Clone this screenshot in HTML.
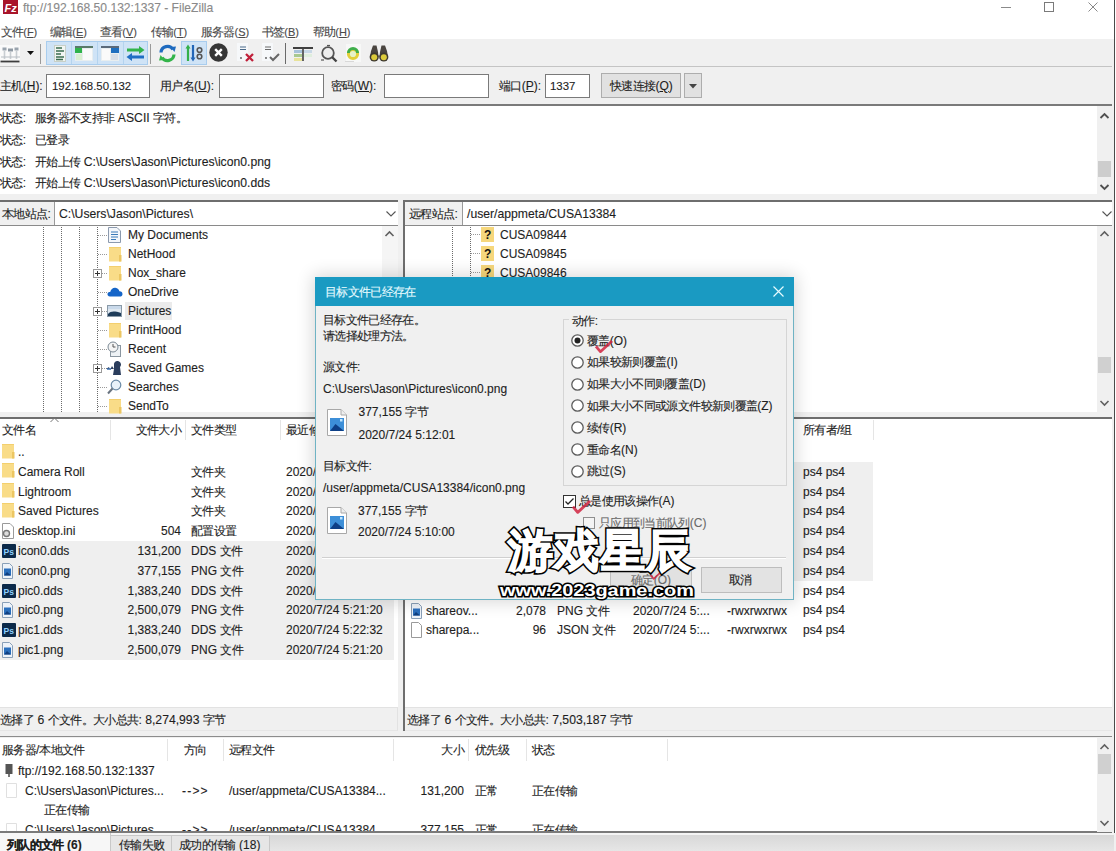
<!DOCTYPE html>
<html><head><meta charset="utf-8">
<style>
*{margin:0;padding:0;box-sizing:border-box}
html,body{width:1116px;height:851px;overflow:hidden;background:#f0f0f0}
body{position:relative;font-family:"Liberation Sans",sans-serif;font-size:12px;color:#1e1e1e}
.a{position:absolute}
.t{position:absolute;white-space:nowrap;line-height:16px;-webkit-text-stroke:0.12px currentColor}
.c{font-size:12px;letter-spacing:-0.65px;font-weight:500}
.u{text-decoration:underline;text-underline-offset:1px}
svg{position:absolute;overflow:visible}
</style></head><body>

<div class="a" style="left:0px;top:0px;width:1116px;height:39px;background:#fff"></div>
<svg style="left:3px;top:0" width="15" height="15" viewBox="0 0 15 15"><rect x="0" y="0" width="15" height="14" fill="#a8142a"/><text x="1.5" y="11.5" font-family="Liberation Sans" font-weight="bold" font-style="italic" font-size="11" fill="#fff">Fz</text></svg>
<div class="t" style="left:23px;top:-0.2px;font-size:12.1px;color:#8a8a8a;">ftp://192.168.50.132:1337 - FileZilla</div>
<div class="a" style="left:1001px;top:7px;width:10px;height:1px;background:#8a8a8a"></div>
<div class="a" style="left:1044px;top:2px;width:10px;height:10px;border:1px solid #7a7a7a"></div>
<svg style="left:1087px;top:1px" width="12" height="12" viewBox="0 0 12 12"><path d="M1.5 1.5L10.5 10.5M10.5 1.5L1.5 10.5" stroke="#888" stroke-width="1"/></svg>
<div class="t" style="left:0.5px;top:23.5px;font-size:11px;color:#4a4a4a;"><span class="c">文件</span>(<span class="u">F</span>)</div>
<div class="t" style="left:49.5px;top:23.5px;font-size:11px;color:#4a4a4a;"><span class="c">编辑</span>(<span class="u">E</span>)</div>
<div class="t" style="left:99.5px;top:23.5px;font-size:11px;color:#4a4a4a;"><span class="c">查看</span>(<span class="u">V</span>)</div>
<div class="t" style="left:150.5px;top:23.5px;font-size:11px;color:#4a4a4a;"><span class="c">传输</span>(<span class="u">T</span>)</div>
<div class="t" style="left:200.5px;top:23.5px;font-size:11px;color:#4a4a4a;"><span class="c">服务器</span>(<span class="u">S</span>)</div>
<div class="t" style="left:261.5px;top:23.5px;font-size:11px;color:#4a4a4a;"><span class="c">书签</span>(<span class="u">B</span>)</div>
<div class="t" style="left:312.5px;top:23.5px;font-size:11px;color:#4a4a4a;"><span class="c">帮助</span>(<span class="u">H</span>)</div>
<div class="a" style="left:0px;top:39px;width:1116px;height:28px;background:#f0f0f0;border-bottom:1px solid #c4c4c4"></div>
<svg style="left:0px;top:43px" width="21" height="20" viewBox="0 0 21 20"><rect x="0" y="2" width="20" height="17" fill="#fafafa"/><rect x="2.5" y="4.5" width="4" height="3" fill="#9aa4ae"/><rect x="8" y="5.5" width="5" height="3" fill="#8f99a3"/><rect x="14.5" y="4.5" width="4" height="3" fill="#9aa4ae"/><path d="M4.5 8V16M10.5 9V16M16.5 8V16" stroke="#c9ced2" stroke-width="1.6"/><path d="M1 14H20" stroke="#b8bec4" stroke-width="1"/><path d="M0.5 18.5H19.5" stroke="#3c3c3c" stroke-width="1.8"/></svg>
<svg style="left:27px;top:51px" width="7" height="5" viewBox="0 0 7 5"><path d="M0 0H7L3.5 4Z" fill="#111"/></svg>
<div class="a" style="left:40px;top:44px;width:1px;height:20px;background:#9a9a9a"></div>
<div class="a" style="left:46px;top:41px;width:102px;height:24px;background:#cfe3f6;border:1px solid #a9cdee"></div>
<div class="a" style="left:71px;top:42px;width:1px;height:22px;background:#b4d3ee"></div>
<div class="a" style="left:97px;top:42px;width:1px;height:22px;background:#b4d3ee"></div>
<div class="a" style="left:123px;top:42px;width:1px;height:22px;background:#b4d3ee"></div>
<svg style="left:54px;top:45px" width="12" height="17" viewBox="0 0 12 17"><rect x="0.5" y="0.5" width="11" height="16" fill="#f2f5f2" stroke="#c8d0c8"/><path d="M2 3H8M2 6H10M2 9H7M2 12H10M2 14.5H9" stroke="#3b6e50" stroke-width="1.3"/></svg>
<svg style="left:75px;top:46px" width="18" height="15" viewBox="0 0 18 15"><rect x="0" y="0" width="18" height="15" fill="#e8eef0"/><rect x="0" y="0" width="18" height="2" fill="#5a7a6a"/><rect x="0" y="2" width="7" height="5" fill="#2fb34a"/><rect x="8" y="3" width="9" height="11" fill="#fafafa"/><rect x="1" y="8" width="6" height="6" fill="#d8efd0"/></svg>
<svg style="left:101px;top:46px" width="18" height="15" viewBox="0 0 18 15"><rect x="0" y="0" width="18" height="15" fill="#e8eef0"/><rect x="0" y="0" width="18" height="2" fill="#5a6a7a"/><rect x="10" y="2" width="8" height="5" fill="#1e6fbf"/><rect x="1" y="3" width="8" height="11" fill="#fafafa"/><rect x="10" y="8" width="7" height="6" fill="#d5dde6"/></svg>
<svg style="left:126px;top:45px" width="19" height="17" viewBox="0 0 19 17"><path d="M1 5H14" stroke="#32b44c" stroke-width="3"/><path d="M13 1L18.5 5L13 9Z" fill="#32b44c"/><path d="M18 12H5" stroke="#1f6ec4" stroke-width="3"/><path d="M6 8L0.5 12L6 16Z" fill="#1f6ec4"/></svg>
<div class="a" style="left:150px;top:44px;width:1px;height:20px;background:#9a9a9a"></div>
<svg style="left:158px;top:44px" width="19" height="19" viewBox="0 0 19 19"><path d="M3 8.5A6.5 6.5 0 0 1 15 5.5" stroke="#1f6bbf" stroke-width="3.2" fill="none"/><path d="M12.5 3L18 2.5L16.5 8Z" fill="#1f6bbf"/><path d="M16 10.5A6.5 6.5 0 0 1 4 13.5" stroke="#33b44a" stroke-width="3.2" fill="none"/><path d="M6.5 16L1 16.5L2.5 11Z" fill="#33b44a"/></svg>
<div class="a" style="left:181px;top:41px;width:26px;height:24px;background:#cfe3f6;border:1px solid #a9cdee"></div>
<svg style="left:185px;top:44px" width="19" height="18" viewBox="0 0 19 18"><path d="M3 17V3" stroke="#34b04a" stroke-width="2.2"/><path d="M0.5 4.5L3 0.5L5.5 4.5Z" fill="#34b04a"/><path d="M8 1V15" stroke="#2266b8" stroke-width="2.2"/><path d="M5.5 13.5L8 17.5L10.5 13.5Z" fill="#2266b8"/><circle cx="14.5" cy="6" r="2.3" fill="none" stroke="#555" stroke-width="1.6"/><circle cx="14.5" cy="12.5" r="2.3" fill="none" stroke="#555" stroke-width="1.6"/></svg>
<svg style="left:209px;top:43px" width="19" height="19" viewBox="0 0 19 19"><circle cx="9.5" cy="9.5" r="9.2" fill="#363636"/><path d="M6.2 6.2L12.8 12.8M12.8 6.2L6.2 12.8" stroke="#fff" stroke-width="2.4"/></svg>
<svg style="left:236px;top:43px" width="19" height="19" viewBox="0 0 19 19"><rect x="1" y="0" width="11" height="18" fill="#f6f8fa"/><path d="M4 4H10M4 6.5H10" stroke="#4a6a8a" stroke-width="1.2"/><circle cx="5" cy="15" r="0.9" fill="#555"/><path d="M10 11L17 18M17 11L10 18" stroke="#c0203a" stroke-width="2.3"/></svg>
<svg style="left:261px;top:43px" width="19" height="19" viewBox="0 0 19 19"><rect x="1" y="0" width="11" height="18" fill="#f6f8fa"/><path d="M4 4H10M4 6.5H10" stroke="#6a6a6a" stroke-width="1.2"/><circle cx="5" cy="15" r="0.9" fill="#555"/><path d="M9 14L12 17L18 11" stroke="#666" stroke-width="2" fill="none"/></svg>
<div class="a" style="left:285px;top:43px;width:1px;height:21px;background:#6a6a6a"></div>
<svg style="left:293px;top:47px" width="20" height="14" viewBox="0 0 20 14"><rect x="0" y="0" width="20" height="2" fill="#404040"/><rect x="1" y="3" width="8" height="3" fill="#a7c2da"/><rect x="11" y="3" width="8" height="3" fill="#c8d8e6"/><rect x="1" y="7" width="8" height="3" fill="#a8c890"/><rect x="11" y="7" width="8" height="3" fill="#dfeedd"/><rect x="1" y="11" width="8" height="3" fill="#e8e39a"/><path d="M10 2V14" stroke="#404040" stroke-width="1.6"/></svg>
<svg style="left:320px;top:45px" width="18" height="17" viewBox="0 0 18 17"><circle cx="8" cy="8" r="5.8" fill="#eeeeee" stroke="#555" stroke-width="1.8"/><path d="M12 12L16.5 16.5" stroke="#444" stroke-width="2.4"/><path d="M7 0.5H10" stroke="#555" stroke-width="1.2"/><path d="M1 15H4" stroke="#555" stroke-width="1.2"/></svg>
<svg style="left:344px;top:44px" width="19" height="19" viewBox="0 0 19 19"><rect x="2" y="0" width="15" height="18" fill="#f7f8f7"/><path d="M1 17.5H10" stroke="#d8d8d8"/><circle cx="9" cy="10" r="4.6" fill="#e6f2c8" stroke="#e2cf3a" stroke-width="3"/><path d="M4.4 9A4.6 4.6 0 0 1 13.6 9" stroke="#3fae4a" stroke-width="3" fill="none"/></svg>
<svg style="left:369px;top:45px" width="20" height="17" viewBox="0 0 20 17"><path d="M4 0.5H7.5L9 7L9.5 12H1L2 6Z" fill="#4a4540"/><path d="M12.5 0.5H16L18 6L19 12H10.5L11 7Z" fill="#4a4540"/><circle cx="5.2" cy="12" r="4.6" fill="#3f3a30"/><circle cx="14.8" cy="12" r="4.6" fill="#3f3a30"/><circle cx="5.2" cy="12.2" r="3" fill="#dccb3a"/><circle cx="14.8" cy="12.2" r="3" fill="#dccb3a"/></svg>
<div class="a" style="left:0px;top:67px;width:1116px;height:38px;background:#f0f0f0"></div>
<div class="a" style="left:0px;top:104px;width:1112px;height:2px;background:#7a7a7a"></div>
<div class="t" style="left:0px;top:78.0px;font-size:12px;color:#1e1e1e;"><span class="c">主机</span>(<span class="u">H</span>):</div>
<div class="a" style="left:46px;top:74px;width:104px;height:24px;background:#fff;border:1px solid #7a7a7a"></div>
<div class="t" style="left:52px;top:78.0px;font-size:11.4px;color:#1e1e1e;">192.168.50.132</div>
<div class="t" style="left:160px;top:78.0px;font-size:12px;color:#1e1e1e;"><span class="c">用户名</span>(<span class="u">U</span>):</div>
<div class="a" style="left:219px;top:74px;width:105px;height:24px;background:#fff;border:1px solid #7a7a7a"></div>
<div class="t" style="left:331px;top:78.0px;font-size:12px;color:#1e1e1e;"><span class="c">密码</span>(<span class="u">W</span>):</div>
<div class="a" style="left:384px;top:74px;width:105px;height:24px;background:#fff;border:1px solid #7a7a7a"></div>
<div class="t" style="left:499px;top:78.0px;font-size:12px;color:#1e1e1e;"><span class="c">端口</span>(<span class="u">P</span>):</div>
<div class="a" style="left:545px;top:74px;width:45px;height:24px;background:#fff;border:1px solid #7a7a7a"></div>
<div class="t" style="left:550px;top:78.0px;font-size:11.4px;color:#1e1e1e;">1337</div>
<div class="a" style="left:601px;top:73px;width:80px;height:25px;background:#e1e1e1;border:1px solid #adadad"></div>
<div class="t" style="left:610px;top:78.0px;font-size:12px;color:#1e1e1e;"><span class="c">快速连接</span>(<span class="u">Q</span>)</div>
<div class="a" style="left:684px;top:73px;width:18px;height:25px;background:#e1e1e1;border:1px solid #adadad"></div>
<svg style="left:689px;top:84px" width="8" height="5" viewBox="0 0 8 5"><path d="M0 0H8L4 4.5Z" fill="#444"/></svg>
<div class="a" style="left:0px;top:106px;width:1112px;height:88px;background:#fff"></div>
<div class="t" style="left:0px;top:110.3px;font-size:12px;color:#1e1e1e;"><span class="c">状态</span>:</div>
<div class="t" style="left:35px;top:110.3px;font-size:12.2px;color:#1e1e1e;"><span class="c">服务器不支持非</span> ASCII <span class="c">字符。</span></div>
<div class="t" style="left:0px;top:131.9px;font-size:12px;color:#1e1e1e;"><span class="c">状态</span>:</div>
<div class="t" style="left:35px;top:131.9px;font-size:12.2px;color:#1e1e1e;"><span class="c">已登录</span></div>
<div class="t" style="left:0px;top:153.5px;font-size:12px;color:#1e1e1e;"><span class="c">状态</span>:</div>
<div class="t" style="left:35px;top:153.5px;font-size:12.2px;color:#1e1e1e;"><span class="c">开始上传</span> C:\Users\Jason\Pictures\icon0.png</div>
<div class="t" style="left:0px;top:175.1px;font-size:12px;color:#1e1e1e;"><span class="c">状态</span>:</div>
<div class="t" style="left:35px;top:175.1px;font-size:12.2px;color:#1e1e1e;"><span class="c">开始上传</span> C:\Users\Jason\Pictures\icon0.dds</div>
<div class="a" style="left:1097px;top:106px;width:15px;height:88px;background:#f0f0f0"></div>
<svg style="left:1100px;top:113px" width="9" height="6" viewBox="0 0 9 6"><path d="M0.5 5L4.5 1L8.5 5" stroke="#505050" stroke-width="1.8" fill="none"/></svg>
<svg style="left:1100px;top:184px" width="9" height="6" viewBox="0 0 9 6"><path d="M0.5 1L4.5 5L8.5 1" stroke="#505050" stroke-width="1.8" fill="none"/></svg>
<div class="a" style="left:1098px;top:161px;width:13px;height:16px;background:#cdcdcd"></div>
<div class="a" style="left:1112px;top:39px;width:2px;height:812px;background:#f0f0f0"></div>
<div class="a" style="left:1114px;top:0px;width:1px;height:851px;background:#4a4a4a"></div>
<div class="a" style="left:1115px;top:0px;width:1px;height:851px;background:#fff"></div>
<div class="a" style="left:0px;top:200px;width:398px;height:2px;background:#6e6e6e"></div>
<div class="a" style="left:0px;top:202px;width:55px;height:23px;background:#f0f0f0;border-right:1px solid #9a9a9a"></div>
<div class="t" style="left:2px;top:205.5px;font-size:12px;color:#1e1e1e;"><span class="c">本地站点</span>:</div>
<div class="a" style="left:55px;top:202px;width:343px;height:23px;background:#fff"></div>
<div class="t" style="left:59px;top:205.5px;font-size:12.2px;color:#1e1e1e;">C:\Users\Jason\Pictures\</div>
<svg style="left:386px;top:211px" width="10" height="6" viewBox="0 0 10 6"><path d="M0.5 0.5L5 5L9.5 0.5" stroke="#555" stroke-width="1.1" fill="none"/></svg>
<div class="a" style="left:0px;top:225px;width:398px;height:1px;background:#8a8a8a"></div>
<div class="a" style="left:0px;top:226px;width:398px;height:186px;background:#fff"></div>

<div class="a" style="left:403px;top:200px;width:709px;height:2px;background:#6e6e6e"></div>
<div class="a" style="left:403px;top:202px;width:2px;height:210px;background:#6e6e6e"></div>
<div class="a" style="left:405px;top:202px;width:58px;height:23px;background:#f0f0f0;border-right:1px solid #9a9a9a"></div>
<div class="t" style="left:409px;top:205.5px;font-size:12px;color:#1e1e1e;"><span class="c">远程站点</span>:</div>
<div class="a" style="left:463px;top:202px;width:649px;height:23px;background:#fff"></div>
<div class="t" style="left:467px;top:205.5px;font-size:12.2px;color:#1e1e1e;">/user/appmeta/CUSA13384</div>
<svg style="left:1102px;top:211px" width="10" height="6" viewBox="0 0 10 6"><path d="M0.5 0.5L5 5L9.5 0.5" stroke="#555" stroke-width="1.1" fill="none"/></svg>
<div class="a" style="left:405px;top:225px;width:707px;height:1px;background:#8a8a8a"></div>
<div class="a" style="left:405px;top:226px;width:707px;height:186px;background:#fff"></div>

<div class="a" style="left:0px;top:417px;width:398px;height:2px;background:#6e6e6e"></div>
<div class="a" style="left:0px;top:419px;width:398px;height:288px;background:#fff"></div>
<div class="a" style="left:403px;top:417px;width:709px;height:2px;background:#6e6e6e"></div>
<div class="a" style="left:403px;top:419px;width:2px;height:312px;background:#6e6e6e"></div>
<div class="a" style="left:405px;top:419px;width:707px;height:288px;background:#fff"></div>

<div class="a" style="left:0px;top:707px;width:398px;height:24px;background:#f0f0f0;border-top:1px solid #e2e2e2;border-right:1px solid #e2e2e2;border-bottom:1px solid #e6e6e6"></div>
<div class="t" style="left:0px;top:711.5px;font-size:12.2px;color:#1e1e1e;"><span class="c">选择了</span> 6 <span class="c">个文件。大小总共</span>: 8,274,993 <span class="c">字节</span></div>
<div class="a" style="left:405px;top:707px;width:707px;height:24px;background:#f0f0f0;border-top:1px solid #e2e2e2;border-bottom:1px solid #e6e6e6"></div>
<div class="t" style="left:407px;top:711.5px;font-size:12.2px;color:#1e1e1e;"><span class="c">选择了</span> 6 <span class="c">个文件。大小总共</span>: 7,503,187 <span class="c">字节</span></div>
<div class="a" style="left:0px;top:735.5px;width:1112px;height:1.5px;background:#8c8c8c"></div>
<div class="a" style="left:0px;top:738px;width:1112px;height:94px;background:#fff"></div>

<div class="a" style="left:0px;top:832px;width:1112px;height:1px;background:#7a7a7a"></div>
<div class="a" style="left:0px;top:833px;width:1116px;height:18px;background:#f0f0f0"></div>



<div class="a" style="left:43px;top:226px;width:1px;height:186px;background:repeating-linear-gradient(#fff 0 1px,#6a6a6a 1px 2px)"></div>
<div class="a" style="left:61px;top:226px;width:1px;height:186px;background:repeating-linear-gradient(#fff 0 1px,#6a6a6a 1px 2px)"></div>
<div class="a" style="left:79px;top:226px;width:1px;height:186px;background:repeating-linear-gradient(#fff 0 1px,#6a6a6a 1px 2px)"></div>
<div class="a" style="left:97px;top:226px;width:1px;height:186px;background:repeating-linear-gradient(#fff 0 1px,#6a6a6a 1px 2px)"></div>
<div class="a" style="left:98px;top:235px;width:9px;height:1px;background:repeating-linear-gradient(90deg,#9a9a9a 0 1px,#fff 1px 2px)"></div>
<svg style="left:108px;top:227px" width="13" height="16" viewBox="0 0 13 16"><path d="M0.5 0.5H9L12.5 4V15.5H0.5Z" fill="#f4f7fb" stroke="#8c9aae"/><path d="M3 5H10M3 7.5H10M3 10H10M3 12.5H8" stroke="#3a7ab8" stroke-width="1"/></svg>
<div class="t" style="left:128px;top:227.0px;font-size:12px;color:#1e1e1e;">My Documents</div>
<div class="a" style="left:98px;top:254px;width:9px;height:1px;background:repeating-linear-gradient(90deg,#9a9a9a 0 1px,#fff 1px 2px)"></div>
<svg style="left:109px;top:247px" width="13" height="15" viewBox="0 0 13 15"><rect x="0" y="0" width="12" height="14.5" fill="#f9dc88"/><rect x="0" y="0" width="12" height="1" fill="#f3cf6e"/><rect x="10" y="8" width="2.5" height="6.5" fill="#ecc662"/></svg>
<div class="t" style="left:128px;top:246.0px;font-size:12px;color:#1e1e1e;">NetHood</div>
<div class="a" style="left:98px;top:273px;width:9px;height:1px;background:repeating-linear-gradient(90deg,#9a9a9a 0 1px,#fff 1px 2px)"></div>
<svg style="left:93.0px;top:268.5px" width="9" height="9" viewBox="0 0 9 9"><rect x="0.5" y="0.5" width="8" height="8" fill="#fff" stroke="#9a9a9a"/><path d="M2 4.5H7M4.5 2V7" stroke="#333"/></svg>
<svg style="left:109px;top:266px" width="13" height="15" viewBox="0 0 13 15"><rect x="0" y="0" width="12" height="14.5" fill="#f9dc88"/><rect x="0" y="0" width="12" height="1" fill="#f3cf6e"/><rect x="10" y="8" width="2.5" height="6.5" fill="#ecc662"/></svg>
<div class="t" style="left:128px;top:265.0px;font-size:12px;color:#1e1e1e;">Nox_share</div>
<div class="a" style="left:98px;top:292px;width:9px;height:1px;background:repeating-linear-gradient(90deg,#9a9a9a 0 1px,#fff 1px 2px)"></div>
<svg style="left:107px;top:287px" width="16" height="10" viewBox="0 0 16 10"><path d="M3 9.5C1 9.5 0.3 8 0.5 6.8C0.8 5.4 2 4.8 3.2 5C3.8 2.2 6 0.5 8.5 0.8C10.6 1 12 2.5 12.4 4.3C14.3 4.2 15.6 5.5 15.5 7.2C15.4 8.6 14.3 9.5 13 9.5Z" fill="#1565c8"/></svg>
<div class="t" style="left:128px;top:284.0px;font-size:12px;color:#1e1e1e;">OneDrive</div>
<div class="a" style="left:98px;top:311px;width:9px;height:1px;background:repeating-linear-gradient(90deg,#9a9a9a 0 1px,#fff 1px 2px)"></div>
<div class="a" style="left:125px;top:302px;width:47px;height:18px;background:#ebebeb"></div>
<svg style="left:93.0px;top:306.5px" width="9" height="9" viewBox="0 0 9 9"><rect x="0.5" y="0.5" width="8" height="8" fill="#fff" stroke="#9a9a9a"/><path d="M2 4.5H7M4.5 2V7" stroke="#333"/></svg>
<svg style="left:107px;top:305px" width="15" height="12" viewBox="0 0 15 12"><rect x="0.5" y="0.5" width="14" height="11" fill="#dfe8f0" stroke="#8a9aa8"/><path d="M1 9C4 6 7 6 14 8V11H1Z" fill="#1e3c5a"/><rect x="1" y="1" width="13" height="3" fill="#c9d9ea"/></svg>
<div class="t" style="left:128px;top:303.0px;font-size:12px;color:#1e1e1e;">Pictures</div>
<div class="a" style="left:98px;top:330px;width:9px;height:1px;background:repeating-linear-gradient(90deg,#9a9a9a 0 1px,#fff 1px 2px)"></div>
<svg style="left:109px;top:323px" width="13" height="15" viewBox="0 0 13 15"><rect x="0" y="0" width="12" height="14.5" fill="#f9dc88"/><rect x="0" y="0" width="12" height="1" fill="#f3cf6e"/><rect x="10" y="8" width="2.5" height="6.5" fill="#ecc662"/></svg>
<div class="t" style="left:128px;top:322.0px;font-size:12px;color:#1e1e1e;">PrintHood</div>
<div class="a" style="left:98px;top:349px;width:9px;height:1px;background:repeating-linear-gradient(90deg,#9a9a9a 0 1px,#fff 1px 2px)"></div>
<svg style="left:107px;top:341px" width="16" height="16" viewBox="0 0 16 16"><rect x="3.5" y="4.5" width="10" height="11" fill="#eef2f5" stroke="#8a96a0"/><circle cx="6" cy="6" r="5" fill="#f4f4f4" stroke="#7a8894"/><path d="M6 3V6H8.5" stroke="#555" fill="none"/></svg>
<div class="t" style="left:128px;top:341.0px;font-size:12px;color:#1e1e1e;">Recent</div>
<div class="a" style="left:98px;top:368px;width:9px;height:1px;background:repeating-linear-gradient(90deg,#9a9a9a 0 1px,#fff 1px 2px)"></div>
<svg style="left:93.0px;top:363.5px" width="9" height="9" viewBox="0 0 9 9"><rect x="0.5" y="0.5" width="8" height="8" fill="#fff" stroke="#9a9a9a"/><path d="M2 4.5H7M4.5 2V7" stroke="#333"/></svg>
<svg style="left:106px;top:360px" width="17" height="16" viewBox="0 0 17 16"><path d="M0 9L3 7L4 10L6 6L8 9V4C8 2 10 0.5 12 1C15 2 16 5 14 7L15 15H7L8 9Z" fill="#2a3d5c"/><path d="M1 9H5" stroke="#3a6fb0" stroke-width="1.5"/></svg>
<div class="t" style="left:128px;top:360.0px;font-size:12px;color:#1e1e1e;">Saved Games</div>
<div class="a" style="left:98px;top:387px;width:9px;height:1px;background:repeating-linear-gradient(90deg,#9a9a9a 0 1px,#fff 1px 2px)"></div>
<svg style="left:107px;top:379px" width="15" height="16" viewBox="0 0 15 16"><circle cx="9" cy="6" r="4.8" fill="#e8f2fa" stroke="#6a8aa6" stroke-width="1.2"/><path d="M5.5 9.5L1 14.5" stroke="#6a7480" stroke-width="2"/></svg>
<div class="t" style="left:128px;top:379.0px;font-size:12px;color:#1e1e1e;">Searches</div>
<div class="a" style="left:98px;top:406px;width:9px;height:1px;background:repeating-linear-gradient(90deg,#9a9a9a 0 1px,#fff 1px 2px)"></div>
<svg style="left:109px;top:399px" width="13" height="15" viewBox="0 0 13 15"><rect x="0" y="0" width="12" height="14.5" fill="#f9dc88"/><rect x="0" y="0" width="12" height="1" fill="#f3cf6e"/><rect x="10" y="8" width="2.5" height="6.5" fill="#ecc662"/></svg>
<div class="t" style="left:128px;top:398.0px;font-size:12px;color:#1e1e1e;">SendTo</div>
<div class="a" style="left:382px;top:226px;width:16px;height:186px;background:#f5f5f5"></div>
<svg style="left:385px;top:231px" width="9" height="6" viewBox="0 0 9 6"><path d="M0.5 5L4.5 1L8.5 5" stroke="#606060" stroke-width="1.6" fill="none"/></svg>
<svg style="left:385px;top:400px" width="9" height="6" viewBox="0 0 9 6"><path d="M0.5 1L4.5 5L8.5 1" stroke="#606060" stroke-width="1.6" fill="none"/></svg>
<div class="a" style="left:383px;top:320px;width:14px;height:20px;background:#d0d0d0"></div>
<div class="a" style="left:452px;top:226px;width:1px;height:186px;background:repeating-linear-gradient(#fff 0 1px,#6a6a6a 1px 2px)"></div>
<div class="a" style="left:470px;top:226px;width:1px;height:51px;background:repeating-linear-gradient(#fff 0 1px,#6a6a6a 1px 2px)"></div>
<div class="a" style="left:471px;top:234px;width:10px;height:1px;background:repeating-linear-gradient(90deg,#9a9a9a 0 1px,#fff 1px 2px)"></div>
<svg style="left:481px;top:227.0px" width="13" height="15" viewBox="0 0 13 15"><rect x="0" y="0" width="13" height="15" fill="#f6d77c"/><text x="3" y="12" font-family="Liberation Sans" font-weight="bold" font-size="12" fill="#111">?</text></svg>
<div class="t" style="left:500px;top:226.5px;font-size:12px;color:#1e1e1e;">CUSA09844</div>
<div class="a" style="left:471px;top:253px;width:10px;height:1px;background:repeating-linear-gradient(90deg,#9a9a9a 0 1px,#fff 1px 2px)"></div>
<svg style="left:481px;top:246.0px" width="13" height="15" viewBox="0 0 13 15"><rect x="0" y="0" width="13" height="15" fill="#f6d77c"/><text x="3" y="12" font-family="Liberation Sans" font-weight="bold" font-size="12" fill="#111">?</text></svg>
<div class="t" style="left:500px;top:245.5px;font-size:12px;color:#1e1e1e;">CUSA09845</div>
<div class="a" style="left:471px;top:272px;width:10px;height:1px;background:repeating-linear-gradient(90deg,#9a9a9a 0 1px,#fff 1px 2px)"></div>
<svg style="left:481px;top:265.0px" width="13" height="15" viewBox="0 0 13 15"><rect x="0" y="0" width="13" height="15" fill="#f6d77c"/><text x="3" y="12" font-family="Liberation Sans" font-weight="bold" font-size="12" fill="#111">?</text></svg>
<div class="t" style="left:500px;top:264.5px;font-size:12px;color:#1e1e1e;">CUSA09846</div>
<div class="a" style="left:1097px;top:226px;width:15px;height:186px;background:#f0f0f0"></div>
<svg style="left:1100px;top:231px" width="9" height="6" viewBox="0 0 9 6"><path d="M0.5 5L4.5 1L8.5 5" stroke="#606060" stroke-width="1.6" fill="none"/></svg>
<svg style="left:1100px;top:400px" width="9" height="6" viewBox="0 0 9 6"><path d="M0.5 1L4.5 5L8.5 1" stroke="#606060" stroke-width="1.6" fill="none"/></svg>
<div class="a" style="left:1098px;top:357px;width:13px;height:16px;background:#d0d0d0"></div>
<svg style="left:50px;top:417px" width="9" height="6" viewBox="0 0 9 6"><path d="M0.5 5L4.5 1L8.5 5" stroke="#777" stroke-width="1" fill="none"/></svg>
<div class="t" style="left:2px;top:421.5px;font-size:12px;color:#1e1e1e;"><span class="c">文件名</span></div>
<div class="a" style="left:110px;top:420px;width:1px;height:20px;background:#e5e5e5"></div>
<div class="t" style="right:935px;top:421.5px;font-size:12px;color:#1e1e1e;text-align:right;"><span class="c">文件大小</span></div>
<div class="a" style="left:185px;top:420px;width:1px;height:20px;background:#e5e5e5"></div>
<div class="t" style="left:191px;top:421.5px;font-size:12px;color:#1e1e1e;"><span class="c">文件类型</span></div>
<div class="a" style="left:280px;top:420px;width:1px;height:20px;background:#e5e5e5"></div>
<div class="t" style="left:286px;top:421.5px;font-size:12px;color:#1e1e1e;"><span class="c">最近修改</span></div>
<div class="a" style="left:0px;top:541px;width:394px;height:119px;background:#efefef"></div>
<svg style="left:2px;top:443.5px" width="13" height="15" viewBox="0 0 13 15"><rect x="0" y="0" width="12" height="14.5" fill="#f9dc88"/><rect x="0" y="0" width="12" height="1" fill="#f3cf6e"/><rect x="10" y="8" width="2.5" height="6.5" fill="#ecc662"/></svg>
<div class="t" style="left:18px;top:444.0px;font-size:12px;color:#1e1e1e;">..</div>
<svg style="left:2px;top:463.3px" width="13" height="15" viewBox="0 0 13 15"><rect x="0" y="0" width="12" height="14.5" fill="#f9dc88"/><rect x="0" y="0" width="12" height="1" fill="#f3cf6e"/><rect x="10" y="8" width="2.5" height="6.5" fill="#ecc662"/></svg>
<div class="t" style="left:18px;top:463.8px;font-size:12px;color:#1e1e1e;">Camera Roll</div>
<div class="t" style="left:191px;top:463.8px;font-size:12px;color:#1e1e1e;"><span class="c">文件夹</span></div>
<div class="t" style="left:286px;top:463.8px;font-size:12px;color:#1e1e1e;">2020/7/24 5:21:20</div>
<svg style="left:2px;top:483.1px" width="13" height="15" viewBox="0 0 13 15"><rect x="0" y="0" width="12" height="14.5" fill="#f9dc88"/><rect x="0" y="0" width="12" height="1" fill="#f3cf6e"/><rect x="10" y="8" width="2.5" height="6.5" fill="#ecc662"/></svg>
<div class="t" style="left:18px;top:483.6px;font-size:12px;color:#1e1e1e;">Lightroom</div>
<div class="t" style="left:191px;top:483.6px;font-size:12px;color:#1e1e1e;"><span class="c">文件夹</span></div>
<div class="t" style="left:286px;top:483.6px;font-size:12px;color:#1e1e1e;">2020/7/24 5:21:20</div>
<svg style="left:2px;top:502.9px" width="13" height="15" viewBox="0 0 13 15"><rect x="0" y="0" width="12" height="14.5" fill="#f9dc88"/><rect x="0" y="0" width="12" height="1" fill="#f3cf6e"/><rect x="10" y="8" width="2.5" height="6.5" fill="#ecc662"/></svg>
<div class="t" style="left:18px;top:503.4px;font-size:12px;color:#1e1e1e;">Saved Pictures</div>
<div class="t" style="left:191px;top:503.4px;font-size:12px;color:#1e1e1e;"><span class="c">文件夹</span></div>
<div class="t" style="left:286px;top:503.4px;font-size:12px;color:#1e1e1e;">2020/7/24 5:21:20</div>
<svg style="left:2px;top:523.2px" width="12" height="16" viewBox="0 0 12 16"><path d="M0.5 0.5H8L11.5 4V15.5H0.5Z" fill="#fff" stroke="#9a9a9a"/><circle cx="4.5" cy="10.5" r="3" fill="#ddd" stroke="#777" stroke-width="1.4"/></svg>
<div class="t" style="left:18px;top:523.2px;font-size:12px;color:#1e1e1e;">desktop.ini</div>
<div class="t" style="right:935px;top:523.2px;font-size:12px;color:#1e1e1e;text-align:right;">504</div>
<div class="t" style="left:191px;top:523.2px;font-size:12px;color:#1e1e1e;"><span class="c">配置设置</span></div>
<div class="t" style="left:286px;top:523.2px;font-size:12px;color:#1e1e1e;">2020/7/24 5:21:20</div>
<svg style="left:2px;top:544.0px" width="14" height="14" viewBox="0 0 14 14"><rect x="0" y="0" width="14" height="14" rx="1" fill="#0c2a4a"/><text x="1.5" y="10.5" font-family="Liberation Sans" font-weight="bold" font-size="8.5" fill="#8fd0ff">Ps</text></svg>
<div class="t" style="left:18px;top:543.0px;font-size:12px;color:#1e1e1e;">icon0.dds</div>
<div class="t" style="right:935px;top:543.0px;font-size:12px;color:#1e1e1e;text-align:right;">131,200</div>
<div class="t" style="left:191px;top:543.0px;font-size:12px;color:#1e1e1e;">DDS <span class="c">文件</span></div>
<div class="t" style="left:286px;top:543.0px;font-size:12px;color:#1e1e1e;">2020/7/24 5:12:01</div>
<svg style="left:2px;top:562.8px" width="11" height="16" viewBox="0 0 11 16"><path d="M0.5 0.5H7.5L10.5 3.5V15.5H0.5Z" fill="#eef3f9" stroke="#8aa0b8"/><rect x="2" y="5.5" width="7" height="7" fill="#2a6fbd"/><path d="M2 12.5L5 9L9 12.5Z" fill="#0f3f80"/></svg>
<div class="t" style="left:18px;top:562.8px;font-size:12px;color:#1e1e1e;">icon0.png</div>
<div class="t" style="right:935px;top:562.8px;font-size:12px;color:#1e1e1e;text-align:right;">377,155</div>
<div class="t" style="left:191px;top:562.8px;font-size:12px;color:#1e1e1e;">PNG <span class="c">文件</span></div>
<div class="t" style="left:286px;top:562.8px;font-size:12px;color:#1e1e1e;">2020/7/24 5:12:01</div>
<svg style="left:2px;top:583.6px" width="14" height="14" viewBox="0 0 14 14"><rect x="0" y="0" width="14" height="14" rx="1" fill="#0c2a4a"/><text x="1.5" y="10.5" font-family="Liberation Sans" font-weight="bold" font-size="8.5" fill="#8fd0ff">Ps</text></svg>
<div class="t" style="left:18px;top:582.6px;font-size:12px;color:#1e1e1e;">pic0.dds</div>
<div class="t" style="right:935px;top:582.6px;font-size:12px;color:#1e1e1e;text-align:right;">1,383,240</div>
<div class="t" style="left:191px;top:582.6px;font-size:12px;color:#1e1e1e;">DDS <span class="c">文件</span></div>
<div class="t" style="left:286px;top:582.6px;font-size:12px;color:#1e1e1e;">2020/7/24 5:22:32</div>
<svg style="left:2px;top:602.4px" width="11" height="16" viewBox="0 0 11 16"><path d="M0.5 0.5H7.5L10.5 3.5V15.5H0.5Z" fill="#eef3f9" stroke="#8aa0b8"/><rect x="2" y="5.5" width="7" height="7" fill="#2a6fbd"/><path d="M2 12.5L5 9L9 12.5Z" fill="#0f3f80"/></svg>
<div class="t" style="left:18px;top:602.4px;font-size:12px;color:#1e1e1e;">pic0.png</div>
<div class="t" style="right:935px;top:602.4px;font-size:12px;color:#1e1e1e;text-align:right;">2,500,079</div>
<div class="t" style="left:191px;top:602.4px;font-size:12px;color:#1e1e1e;">PNG <span class="c">文件</span></div>
<div class="t" style="left:286px;top:602.4px;font-size:12px;color:#1e1e1e;">2020/7/24 5:21:20</div>
<svg style="left:2px;top:623.2px" width="14" height="14" viewBox="0 0 14 14"><rect x="0" y="0" width="14" height="14" rx="1" fill="#0c2a4a"/><text x="1.5" y="10.5" font-family="Liberation Sans" font-weight="bold" font-size="8.5" fill="#8fd0ff">Ps</text></svg>
<div class="t" style="left:18px;top:622.2px;font-size:12px;color:#1e1e1e;">pic1.dds</div>
<div class="t" style="right:935px;top:622.2px;font-size:12px;color:#1e1e1e;text-align:right;">1,383,240</div>
<div class="t" style="left:191px;top:622.2px;font-size:12px;color:#1e1e1e;">DDS <span class="c">文件</span></div>
<div class="t" style="left:286px;top:622.2px;font-size:12px;color:#1e1e1e;">2020/7/24 5:22:32</div>
<svg style="left:2px;top:642.0px" width="11" height="16" viewBox="0 0 11 16"><path d="M0.5 0.5H7.5L10.5 3.5V15.5H0.5Z" fill="#eef3f9" stroke="#8aa0b8"/><rect x="2" y="5.5" width="7" height="7" fill="#2a6fbd"/><path d="M2 12.5L5 9L9 12.5Z" fill="#0f3f80"/></svg>
<div class="t" style="left:18px;top:642.0px;font-size:12px;color:#1e1e1e;">pic1.png</div>
<div class="t" style="right:935px;top:642.0px;font-size:12px;color:#1e1e1e;text-align:right;">2,500,079</div>
<div class="t" style="left:191px;top:642.0px;font-size:12px;color:#1e1e1e;">PNG <span class="c">文件</span></div>
<div class="t" style="left:286px;top:642.0px;font-size:12px;color:#1e1e1e;">2020/7/24 5:21:20</div>
<div class="t" style="left:803px;top:421.5px;font-size:12px;color:#1e1e1e;"><span class="c">所有者</span>/<span class="c">组</span></div>
<div class="a" style="left:873px;top:420px;width:1px;height:20px;background:#e5e5e5"></div>
<div class="a" style="left:405px;top:462px;width:468px;height:119px;background:#efefef"></div>
<div class="t" style="left:803px;top:463.8px;font-size:12px;color:#1e1e1e;">ps4 ps4</div>
<div class="t" style="left:803px;top:483.6px;font-size:12px;color:#1e1e1e;">ps4 ps4</div>
<div class="t" style="left:803px;top:503.4px;font-size:12px;color:#1e1e1e;">ps4 ps4</div>
<div class="t" style="left:803px;top:523.2px;font-size:12px;color:#1e1e1e;">ps4 ps4</div>
<div class="t" style="left:803px;top:543.0px;font-size:12px;color:#1e1e1e;">ps4 ps4</div>
<div class="t" style="left:803px;top:562.8px;font-size:12px;color:#1e1e1e;">ps4 ps4</div>
<div class="t" style="left:803px;top:582.6px;font-size:12px;color:#1e1e1e;">ps4 ps4</div>
<div class="t" style="left:803px;top:602.4px;font-size:12px;color:#1e1e1e;">ps4 ps4</div>
<div class="t" style="left:803px;top:622.2px;font-size:12px;color:#1e1e1e;">ps4 ps4</div>
<svg style="left:411px;top:602.6px" width="11" height="16" viewBox="0 0 11 16"><path d="M0.5 0.5H7.5L10.5 3.5V15.5H0.5Z" fill="#eef3f9" stroke="#8aa0b8"/><rect x="2" y="5.5" width="7" height="7" fill="#2a6fbd"/><path d="M2 12.5L5 9L9 12.5Z" fill="#0f3f80"/></svg>
<div class="t" style="left:426px;top:602.6px;font-size:12px;color:#1e1e1e;">shareov...</div>
<div class="t" style="right:570px;top:602.6px;font-size:12px;color:#1e1e1e;text-align:right;">2,078</div>
<div class="t" style="left:557px;top:602.6px;font-size:12px;color:#1e1e1e;">PNG <span class="c">文件</span></div>
<div class="t" style="left:633px;top:602.6px;font-size:12px;color:#1e1e1e;">2020/7/24 5:...</div>
<div class="t" style="left:727px;top:602.6px;font-size:12px;color:#1e1e1e;">-rwxrwxrwx</div>
<svg style="left:411px;top:622.4px" width="11" height="16" viewBox="0 0 11 16"><path d="M0.5 0.5H7.5L10.5 3.5V15.5H0.5Z" fill="#fff" stroke="#9a9a9a"/></svg>
<div class="t" style="left:426px;top:622.4px;font-size:12px;color:#1e1e1e;">sharepa...</div>
<div class="t" style="right:570px;top:622.4px;font-size:12px;color:#1e1e1e;text-align:right;">96</div>
<div class="t" style="left:557px;top:622.4px;font-size:12px;color:#1e1e1e;">JSON <span class="c">文件</span></div>
<div class="t" style="left:633px;top:622.4px;font-size:12px;color:#1e1e1e;">2020/7/24 5:...</div>
<div class="t" style="left:727px;top:622.4px;font-size:12px;color:#1e1e1e;">-rwxrwxrwx</div>
<div class="t" style="left:2px;top:741.5px;font-size:12px;color:#1e1e1e;"><span class="c">服务器</span>/<span class="c">本地文件</span></div>
<div class="a" style="left:167px;top:739px;width:1px;height:22px;background:#e5e5e5"></div>
<div class="t" style="left:184px;top:741.5px;font-size:12px;color:#1e1e1e;"><span class="c">方向</span></div>
<div class="a" style="left:223px;top:739px;width:1px;height:22px;background:#e5e5e5"></div>
<div class="t" style="left:229px;top:741.5px;font-size:12px;color:#1e1e1e;"><span class="c">远程文件</span></div>
<div class="a" style="left:393px;top:739px;width:1px;height:22px;background:#e5e5e5"></div>
<div class="t" style="right:652px;top:741.5px;font-size:12px;color:#1e1e1e;text-align:right;"><span class="c">大小</span></div>
<div class="a" style="left:468px;top:739px;width:1px;height:22px;background:#e5e5e5"></div>
<div class="t" style="left:475px;top:741.5px;font-size:12px;color:#1e1e1e;"><span class="c">优先级</span></div>
<div class="a" style="left:526px;top:739px;width:1px;height:22px;background:#e5e5e5"></div>
<div class="t" style="left:532px;top:741.5px;font-size:12px;color:#1e1e1e;"><span class="c">状态</span></div>
<div class="a" style="left:667px;top:739px;width:1px;height:22px;background:#e5e5e5"></div>
<svg style="left:5px;top:764px" width="8" height="14" viewBox="0 0 8 14"><rect x="0.5" y="0" width="7" height="10" fill="#555"/><rect x="3" y="10" width="2" height="3" fill="#777"/></svg>
<div class="t" style="left:18px;top:763.0px;font-size:12px;color:#1e1e1e;">ftp://192.168.50.132:1337</div>
<svg style="left:6px;top:783px" width="11" height="15" viewBox="0 0 11 15"><path d="M0.5 0.5H10.5V14.5H0.5Z" fill="#fff" stroke="#e0e0e0"/></svg>
<div class="t" style="left:25px;top:783.0px;font-size:12px;color:#1e1e1e;">C:\Users\Jason\Pictures...</div>
<div class="t" style="left:182px;top:783.0px;font-size:12px;color:#1e1e1e;letter-spacing:1.2px">--&gt;&gt;</div>
<div class="t" style="left:229px;top:783.0px;font-size:12px;color:#1e1e1e;">/user/appmeta/CUSA13384...</div>
<div class="t" style="right:652px;top:783.0px;font-size:12px;color:#1e1e1e;text-align:right;">131,200</div>
<div class="t" style="left:475px;top:783.0px;font-size:12px;color:#1e1e1e;"><span class="c">正常</span></div>
<div class="t" style="left:532px;top:783.0px;font-size:12px;color:#1e1e1e;"><span class="c">正在传输</span></div>
<div class="t" style="left:44px;top:802.0px;font-size:12px;color:#1e1e1e;"><span class="c">正在传输</span></div>
<svg style="left:6px;top:823px" width="11" height="15" viewBox="0 0 11 15"><path d="M0.5 0.5H10.5V14.5H0.5Z" fill="#fff" stroke="#e0e0e0"/></svg>
<div class="t" style="left:25px;top:822.0px;font-size:12px;color:#1e1e1e;">C:\Users\Jason\Pictures...</div>
<div class="t" style="left:182px;top:822.0px;font-size:12px;color:#1e1e1e;letter-spacing:1.2px">--&gt;&gt;</div>
<div class="t" style="left:229px;top:822.0px;font-size:12px;color:#1e1e1e;">/user/appmeta/CUSA13384...</div>
<div class="t" style="right:652px;top:822.0px;font-size:12px;color:#1e1e1e;text-align:right;">377,155</div>
<div class="t" style="left:475px;top:822.0px;font-size:12px;color:#1e1e1e;"><span class="c">正常</span></div>
<div class="t" style="left:532px;top:822.0px;font-size:12px;color:#1e1e1e;"><span class="c">正在传输</span></div>
<div class="a" style="left:0px;top:831px;width:1112px;height:1.5px;background:#7a7a7a"></div>
<div class="a" style="left:0px;top:832.5px;width:1114px;height:18.5px;background:linear-gradient(#f4f4f4 0 1.5px,#d8d8d8 2.5px,#e6e6e6)"></div>
<div class="a" style="left:1097px;top:738px;width:15px;height:94px;background:#f0f0f0"></div>
<svg style="left:1100px;top:744px" width="9" height="6" viewBox="0 0 9 6"><path d="M0.5 5L4.5 1L8.5 5" stroke="#606060" stroke-width="1.6" fill="none"/></svg>
<svg style="left:1100px;top:820px" width="9" height="6" viewBox="0 0 9 6"><path d="M0.5 1L4.5 5L8.5 1" stroke="#606060" stroke-width="1.6" fill="none"/></svg>
<div class="a" style="left:1098px;top:754px;width:13px;height:20px;background:#d0d0d0"></div>
<div class="a" style="left:0px;top:833px;width:111px;height:18px;background:#f7f7f7;border-right:1px solid #c8c8c8"></div>
<div class="t" style="left:7px;top:836.5px;font-size:12px;color:#1e1e1e;font-weight:bold"><span class="c" style="font-weight:bold">列队的文件</span> (6)</div>
<div class="a" style="left:111px;top:835px;width:61px;height:16px;background:#e6e6e6;border-right:1px solid #c8c8c8;border-top:1px solid #c8c8c8"></div>
<div class="t" style="left:119px;top:837.0px;font-size:12px;color:#1e1e1e;"><span class="c">传输失败</span></div>
<div class="a" style="left:172px;top:835px;width:98px;height:16px;background:#e6e6e6;border-right:1px solid #c8c8c8;border-top:1px solid #c8c8c8"></div>
<div class="t" style="left:179px;top:837.0px;font-size:12px;color:#1e1e1e;"><span class="c">成功的传输</span> (18)</div>
<div class="a" style="left:315px;top:277px;width:479px;height:323px;box-shadow:0 0 16px 2px rgba(0,0,0,0.16);background:#f0f0f0;border:1px solid #6fb3c4;border-top:none"></div>
<div class="a" style="left:315px;top:277px;width:479px;height:29px;background:#1a9ac2"></div>
<div class="t" style="left:325px;top:283.5px;font-size:12.5px;color:#e6fbff;"><span class="c">目标文件已经存在</span></div>
<svg style="left:773px;top:286px" width="11" height="11" viewBox="0 0 11 11"><path d="M0.5 0.5L10.5 10.5M10.5 0.5L0.5 10.5" stroke="#e6fbff" stroke-width="1.2"/></svg>
<div class="t" style="left:323px;top:312.0px;font-size:12px;color:#1e1e1e;"><span class="c">目标文件已经存在。</span></div>
<div class="t" style="left:323px;top:328.0px;font-size:12px;color:#1e1e1e;"><span class="c">请选择处理方法。</span></div>
<div class="t" style="left:323px;top:358.5px;font-size:12px;color:#1e1e1e;"><span class="c">源文件</span>:</div>
<div class="t" style="left:323px;top:381.4px;font-size:12px;color:#1e1e1e;">C:\Users\Jason\Pictures\icon0.png</div>
<svg style="left:327px;top:409px" width="20" height="27" viewBox="0 0 20 27"><path d="M0.5 0.5H14L19.5 6V26.5H0.5Z" fill="#fff" stroke="#a8a8a8"/><path d="M14 0.5V6H19.5" fill="#eee" stroke="#a8a8a8"/><rect x="3" y="9" width="14" height="13" fill="#3d8fd8"/><path d="M3 22L8.5 15L17 22Z" fill="#0e3f86"/><rect x="13" y="10" width="2.5" height="2.5" fill="#bfe6ff"/></svg>
<div class="t" style="left:358.5px;top:404.4px;font-size:12px;color:#1e1e1e;">377,155 <span class="c">字节</span></div>
<div class="t" style="left:358.5px;top:426.6px;font-size:12px;color:#1e1e1e;">2020/7/24 5:12:01</div>
<div class="t" style="left:323px;top:457.8px;font-size:12px;color:#1e1e1e;"><span class="c">目标文件</span>:</div>
<div class="t" style="left:323px;top:480.2px;font-size:12px;color:#1e1e1e;">/user/appmeta/CUSA13384/icon0.png</div>
<svg style="left:327px;top:507px" width="20" height="27" viewBox="0 0 20 27"><path d="M0.5 0.5H14L19.5 6V26.5H0.5Z" fill="#fff" stroke="#a8a8a8"/><path d="M14 0.5V6H19.5" fill="#eee" stroke="#a8a8a8"/><rect x="3" y="9" width="14" height="13" fill="#3d8fd8"/><path d="M3 22L8.5 15L17 22Z" fill="#0e3f86"/><rect x="13" y="10" width="2.5" height="2.5" fill="#bfe6ff"/></svg>
<div class="t" style="left:358px;top:502.6px;font-size:12px;color:#1e1e1e;">377,155 <span class="c">字节</span></div>
<div class="t" style="left:358px;top:523.8px;font-size:12px;color:#1e1e1e;">2020/7/24 5:10:00</div>
<div class="a" style="left:563px;top:319px;width:224px;height:167px;border:1px solid #d5d5d5"></div>
<div class="a" style="left:569px;top:313px;width:32px;height:14px;background:#f0f0f0"></div>
<div class="t" style="left:572px;top:312.5px;font-size:12px;color:#1e1e1e;"><span class="c">动作</span>:</div>
<svg style="left:571px;top:334.1px" width="13" height="13" viewBox="0 0 13 13"><circle cx="6.5" cy="6.5" r="5.7" fill="#fff" stroke="#5c5c5c" stroke-width="1.3"/><circle cx="6.5" cy="6.5" r="3" fill="#222"/></svg>
<div class="t" style="left:587px;top:332.6px;font-size:12px;color:#1e1e1e;"><span class="c">覆盖</span>(O)</div>
<svg style="left:571px;top:355.9px" width="13" height="13" viewBox="0 0 13 13"><circle cx="6.5" cy="6.5" r="5.7" fill="#fff" stroke="#5c5c5c" stroke-width="1.3"/></svg>
<div class="t" style="left:587px;top:354.4px;font-size:12px;color:#1e1e1e;"><span class="c">如果较新则覆盖</span>(I)</div>
<svg style="left:571px;top:377.6px" width="13" height="13" viewBox="0 0 13 13"><circle cx="6.5" cy="6.5" r="5.7" fill="#fff" stroke="#5c5c5c" stroke-width="1.3"/></svg>
<div class="t" style="left:587px;top:376.1px;font-size:12px;color:#1e1e1e;"><span class="c">如果大小不同则覆盖</span>(D)</div>
<svg style="left:571px;top:399.4px" width="13" height="13" viewBox="0 0 13 13"><circle cx="6.5" cy="6.5" r="5.7" fill="#fff" stroke="#5c5c5c" stroke-width="1.3"/></svg>
<div class="t" style="left:587px;top:397.9px;font-size:12px;color:#1e1e1e;"><span class="c">如果大小不同或源文件较新则覆盖</span>(Z)</div>
<svg style="left:571px;top:421.2px" width="13" height="13" viewBox="0 0 13 13"><circle cx="6.5" cy="6.5" r="5.7" fill="#fff" stroke="#5c5c5c" stroke-width="1.3"/></svg>
<div class="t" style="left:587px;top:419.7px;font-size:12px;color:#1e1e1e;"><span class="c">续传</span>(R)</div>
<svg style="left:571px;top:443.0px" width="13" height="13" viewBox="0 0 13 13"><circle cx="6.5" cy="6.5" r="5.7" fill="#fff" stroke="#5c5c5c" stroke-width="1.3"/></svg>
<div class="t" style="left:587px;top:441.5px;font-size:12px;color:#1e1e1e;"><span class="c">重命名</span>(N)</div>
<svg style="left:571px;top:464.7px" width="13" height="13" viewBox="0 0 13 13"><circle cx="6.5" cy="6.5" r="5.7" fill="#fff" stroke="#5c5c5c" stroke-width="1.3"/></svg>
<div class="t" style="left:587px;top:463.2px;font-size:12px;color:#1e1e1e;"><span class="c">跳过</span>(S)</div>
<svg style="left:563px;top:495px" width="13" height="13" viewBox="0 0 13 13"><rect x="0.5" y="0.5" width="12" height="12" fill="#fff" stroke="#333"/><path d="M2.5 6.5L5 9L10.5 3.5" stroke="#222" stroke-width="1.3" fill="none"/></svg>
<div class="t" style="left:579px;top:493.4px;font-size:12px;color:#1e1e1e;"><span class="c">总是使用该操作</span>(A)</div>
<svg style="left:583px;top:517px" width="12" height="12" viewBox="0 0 12 12"><rect x="0.5" y="0.5" width="11" height="11" fill="#f4f4f4" stroke="#8f8f8f"/></svg>
<div class="t" style="left:599px;top:514.8px;font-size:12px;color:#6a6a6a;"><span class="c">只应用到当前队列</span>(C)</div>
<div class="a" style="left:322px;top:557px;width:464px;height:1px;background:#d0d0d0"></div>
<div class="a" style="left:322px;top:558px;width:464px;height:1px;background:#fff"></div>
<div class="a" style="left:610px;top:567px;width:82px;height:26px;background:#e1e1e1;border:1px solid #c0c0c0"></div>
<div class="t" style="left:631px;top:572.0px;font-size:12px;color:#6a6a6a;"><span class="c">确定</span>(O)</div>
<div class="a" style="left:701px;top:567px;width:81px;height:26px;background:#e3e3e3;border:1px solid #bdbdbd"></div>
<div class="t" style="left:729px;top:572.0px;font-size:12px;color:#1e1e1e;"><span class="c">取消</span></div>
<svg style="left:595px;top:340px" width="18.0" height="14.4" viewBox="0 0 20 16"><path d="M1 7L6 13L19 1" stroke="#d0233f" stroke-width="3" fill="none" stroke-linejoin="round" opacity="0.85"/></svg>
<svg style="left:572px;top:500px" width="19.0" height="15.2" viewBox="0 0 20 16"><path d="M1 7L6 13L19 1" stroke="#d0233f" stroke-width="3" fill="none" stroke-linejoin="round" opacity="0.85"/></svg>
<svg style="left:650px;top:571px" width="12.0" height="9.6" viewBox="0 0 20 16"><path d="M1 7L6 13L19 1" stroke="#d0233f" stroke-width="3" fill="none" stroke-linejoin="round" opacity="0.85"/></svg>
<div class="t" style="left:508px;top:521px;font-size:45px;line-height:60px;font-weight:900;letter-spacing:1px;color:#000;-webkit-text-stroke:4.6px #000">游戏星辰</div>
<div class="t" style="left:508px;top:521px;font-size:45px;line-height:60px;font-weight:900;letter-spacing:1px;color:#fff;-webkit-text-stroke:1.5px #fff">游戏星辰</div>
<div class="t" style="left:500px;top:581px;font-size:17px;line-height:20px;font-weight:bold;color:#fff;-webkit-text-stroke:3px #000;paint-order:stroke fill;transform:scaleX(1.17);transform-origin:0 0">www.2023game.com</div>
</body></html>
